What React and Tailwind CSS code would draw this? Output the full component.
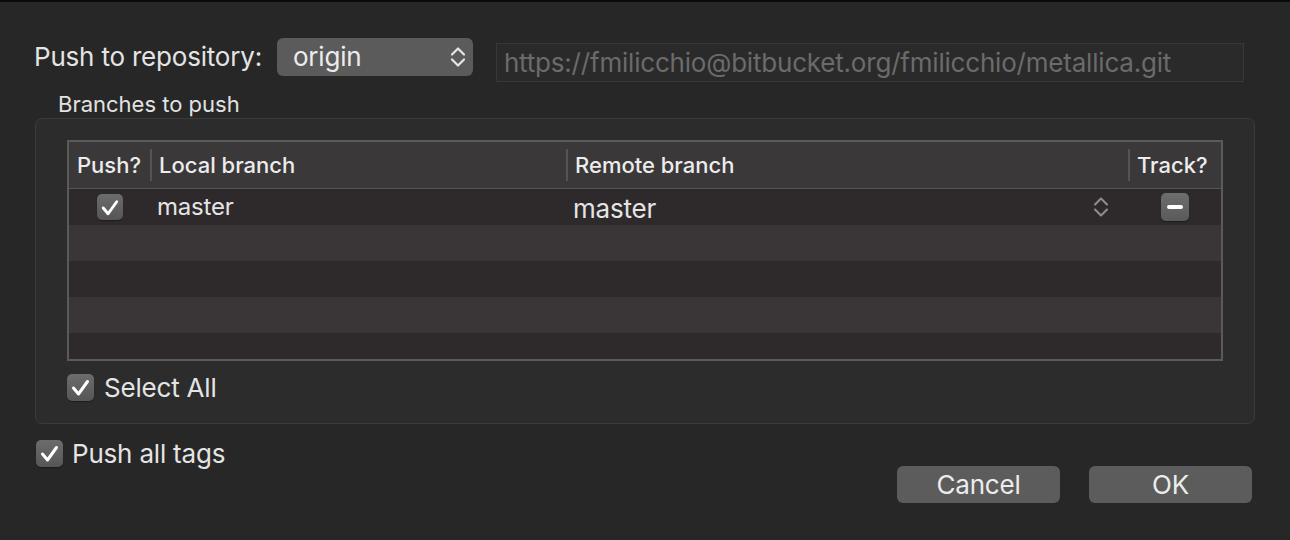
import React from "react";

function Chevrons({ color = "#e6e6e6", w = 16, h = 22, sw = 2.2 }) {
  return (
    <svg width={w} height={h} viewBox="0 0 16 22" fill="none">
      <path d="M2 8.5 L8 2.5 L14 8.5" stroke={color} strokeWidth={sw} strokeLinecap="round" strokeLinejoin="round" />
      <path d="M2 13.5 L8 19.5 L14 13.5" stroke={color} strokeWidth={sw} strokeLinecap="round" strokeLinejoin="round" />
    </svg>
  );
}

function Check({ size = "w-[27px] h-[27px]" }) {
  return (
    <div className={`${size} shrink-0 rounded-[5px] bg-linear-to-b from-[#6c6c6c] to-[#565656] flex items-center justify-center shadow-[0_1px_1px_rgba(0,0,0,0.35)]`}>
      <svg width="27" height="27" viewBox="0 0 27 27" fill="none">
        <path d="M6.5 14 L11.5 20 L20.5 7.5" stroke="#ffffff" strokeWidth="3" strokeLinecap="round" strokeLinejoin="round" />
      </svg>
    </div>
  );
}

function HeaderCell({ width, label, divider = true, first = false }) {
  return (
    <div className={`${width} h-full flex items-center shrink-0`}>
      {divider && <div className="w-[2px] h-[32px] bg-[#555354]" />}
      <span className={`${first ? "pl-[8px]" : "pl-[7px]"} text-[22px] font-medium text-[#ececec] leading-none -mt-[1px]`}>{label}</span>
    </div>
  );
}

export default function App() {
  const rows = [0, 1, 2, 3, 4];
  return (
    <div className="w-[1290px] h-[540px] bg-[#272727] border-t-2 border-[#0a0a0a] overflow-hidden [font-family:Inter,sans-serif] text-[#e4e4e4] antialiased">
      {/* Repository row */}
      <div className="flex items-start pl-[34px] pt-[36px]">
        <div className="h-[38px] flex items-center text-[26px] tracking-[-0.2px] leading-none">Push to repository:</div>
        <div className="ml-[15px] w-[196px] h-[38px] rounded-[6px] bg-[#5b5b5b] flex items-center justify-between pl-[16px] pr-[7px] text-[26px] tracking-[-0.2px] leading-none text-[#ececec]">
          <span className="-mt-[1px]">origin</span>
          <Chevrons />
        </div>
        <div className="ml-[23px] mt-[5px] w-[748px] h-[39px] bg-[#2a2a2a] border border-[#383838] flex items-center pl-[7px] text-[26px] tracking-[-0.2px] leading-none text-[#6b6b6b] whitespace-nowrap overflow-hidden">
          https://fmilicchio@bitbucket.org/fmilicchio/metallica.git
        </div>
      </div>

      {/* Branches label */}
      <div className="pl-[58px] mt-[11px] text-[22px] leading-none text-[#e2e2e2]">Branches to push</div>

      {/* Group box */}
      <div className="ml-[35px] mt-[3px] w-[1220px] h-[306px] rounded-[7px] border border-[#3b3b3b] bg-[#2c2c2c] pt-[21px] pl-[31px]">
        <div className="w-[1156px] h-[221px] border-2 border-[#5b5a5a] bg-[#2e2a2b] overflow-hidden">
          <div className="h-[47px] bg-[#3b3839] border-b border-[#565455] flex">
            <HeaderCell width="w-[81px]" label="Push?" divider={false} first />
            <HeaderCell width="w-[416px]" label="Local branch" />
            <HeaderCell width="w-[562px]" label="Remote branch" />
            <HeaderCell width="w-[93px]" label="Track?" />
          </div>
          {rows.map((i) => (
            <div key={i} className={`h-[36px] flex ${i % 2 === 0 ? "bg-[#2e2a2b]" : "bg-[#3a3637]"}`}>
              {i === 0 && (
                <>
                  <div className="w-[81px] flex items-center justify-center shrink-0 pl-[1px]">
                    <Check size="w-[26px] h-[26px]" />
                  </div>
                  <div className="w-[416px] flex items-center shrink-0 pl-[7px] text-[24px] tracking-[-0.2px] leading-none">
                    <span className="-mt-[1px]">master</span>
                  </div>
                  <div className="w-[562px] flex items-center justify-between shrink-0 pl-[7px] pr-[19px] text-[26px] tracking-[-0.2px] leading-none">
                    <span className="pt-[3px]">master</span>
                    <Chevrons color="#8e8e8e" w={16} h={24} sw={2} />
                  </div>
                  <div className="w-[93px] flex items-center justify-center shrink-0">
                    <div className="w-[28px] h-[28px] rounded-[5px] bg-linear-to-b from-[#6e6e6e] to-[#5a5a5a] flex items-center justify-center shadow-[0_1px_1px_rgba(0,0,0,0.35)]">
                      <div className="w-[16px] h-[4px] rounded-full bg-white" />
                    </div>
                  </div>
                </>
              )}
            </div>
          ))}
        </div>

        {/* Select All */}
        <div className="mt-[13px] flex items-center gap-[10px]">
          <Check />
          <span className="text-[26px] tracking-[-0.2px] leading-none">Select All</span>
        </div>
      </div>

      {/* Bottom row */}
      <div className="flex justify-between items-start pl-[36px] pr-[38px]">
        <div className="mt-[16px] flex items-center gap-[9px]">
          <Check />
          <span className="text-[26px] tracking-[-0.2px] leading-none">Push all tags</span>
        </div>
        <div className="mt-[42px] flex gap-[29px]">
          <div className="w-[163px] h-[37px] rounded-[6px] bg-[#5c5c5c] flex items-center justify-center text-[26px] tracking-[-0.2px] leading-none text-[#ececec]">Cancel</div>
          <div className="w-[163px] h-[37px] rounded-[6px] bg-[#5c5c5c] flex items-center justify-center text-[26px] tracking-[-0.2px] leading-none text-[#ececec]">OK</div>
        </div>
      </div>
    </div>
  );
}
